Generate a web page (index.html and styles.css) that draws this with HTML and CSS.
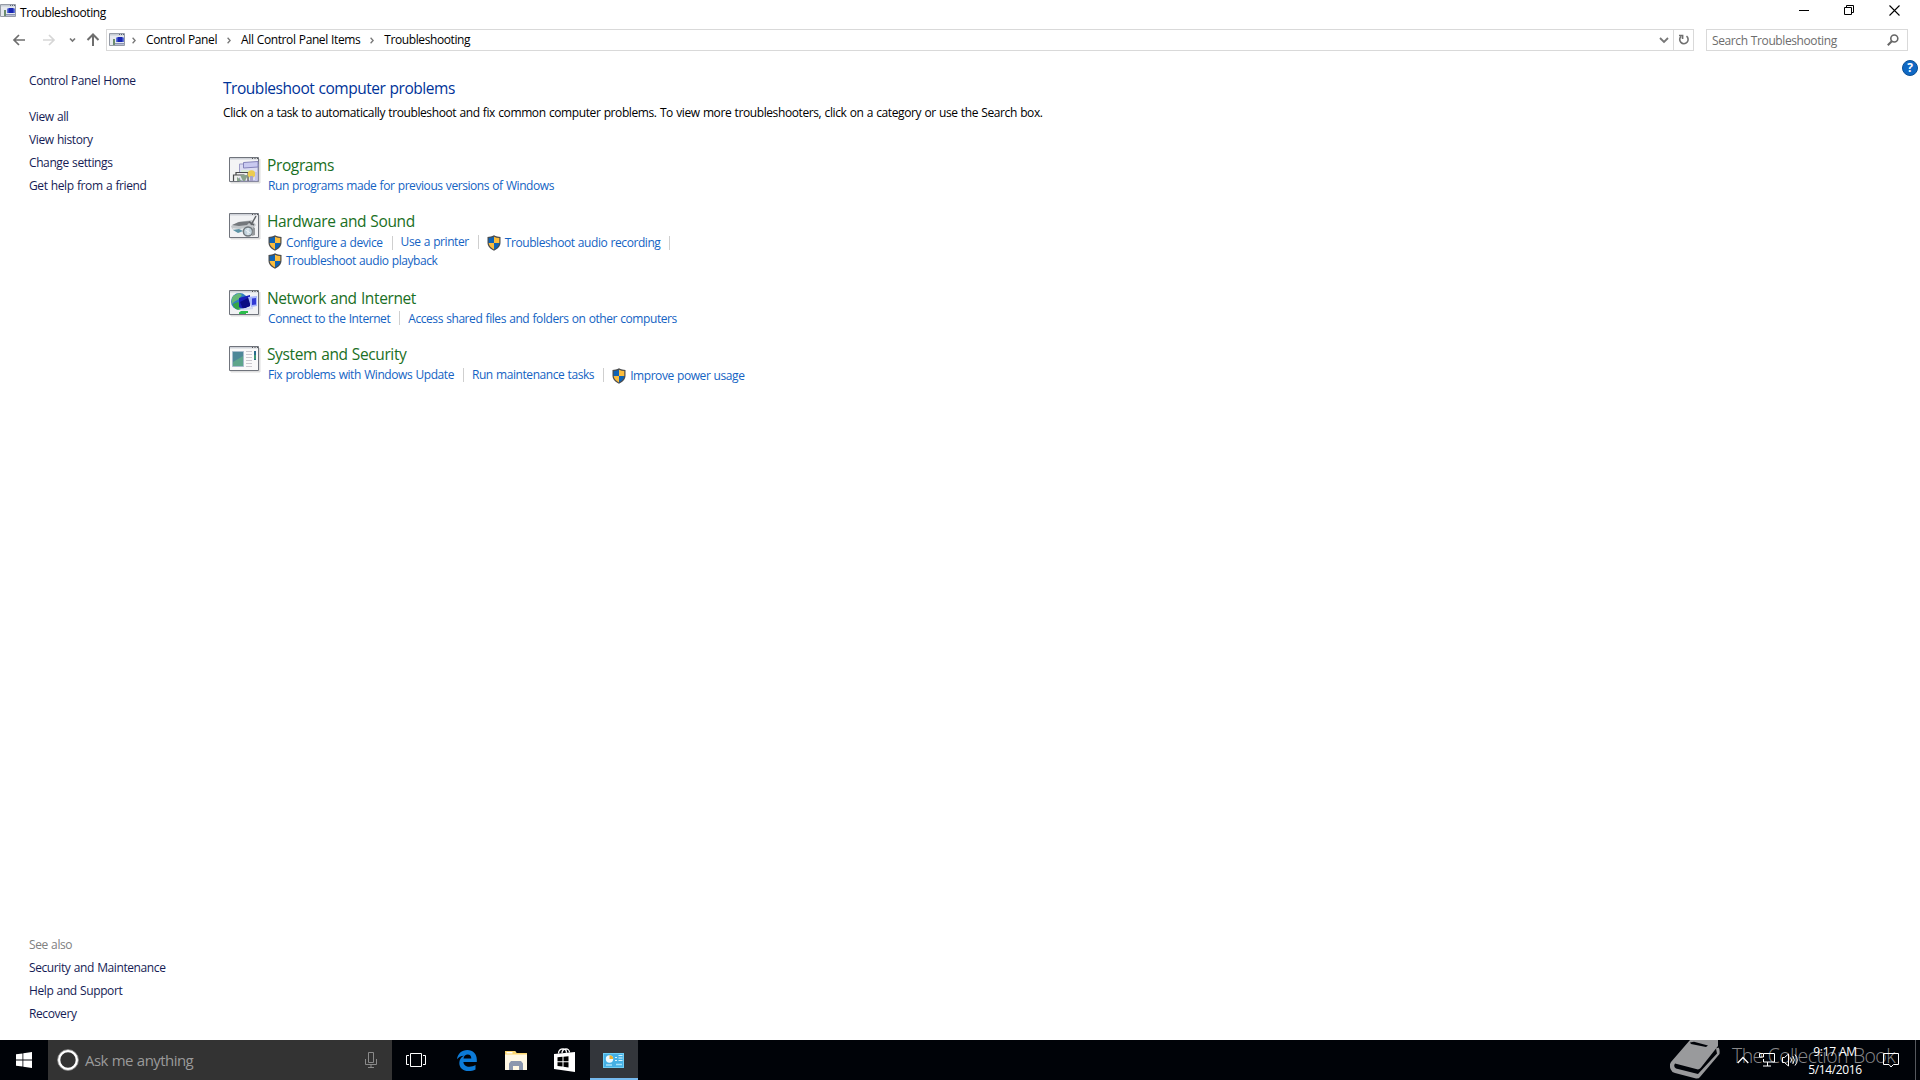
FILE: index.html
```html
<!DOCTYPE html>
<html lang="en">
<head>
    <meta charset="UTF-8">
    <title>Troubleshooting</title>
    <link rel="stylesheet" href="styles.css">
</head>
<body>
    <!-- shared icons -->
    <svg width="0" height="0" class="defs">
        <symbol id="shield" viewBox="0 0 14 16">
            <path d="M7 .3C5 1.6 2.6 2 .5 2v5.500c0 4 3 6.700 6.500 8.200 3.500-1.500 6.500-4.200 6.500-8.200V2C11.400 2 9 1.600 7 .3z" fill="#4b4c4e"/>
            <path d="M7 1.700C5.300 2.600 3.500 3 1.700 3.100V8H7z" fill="#0f63b5"/>
            <path d="M7 1.700c1.700.9 3.500 1.300 5.300 1.400V8H7z" fill="#fcbd3c"/>
            <path d="M1.700 8H7v6.400C4.200 13.100 1.900 11 1.700 8z" fill="#fcbd3c"/>
            <path d="M12.300 8H7v6.400c2.800-1.300 5.100-3.400 5.300-6.400z" fill="#0f63b5"/>
        </symbol>
        <symbol id="app" viewBox="0 0 16 13">
            <path d="M.5.5h15v12H.5z" fill="#e6e9ee" stroke="#959ba6"/>
            <path d="M1 1h14v1.500H1z" fill="#c6ccd4"/>
            <path d="M10 1h1v1h-1zM12 1h1v1h-1zM14 1h1v1h-1z" fill="#596373"/>
            <path d="M7 4.500h8V9H7z" fill="#5f74d8"/>
            <path d="M8.500 4h5v5h-5z" fill="#1a27b4"/>
            <path d="M4 6h2v6H4z" fill="#6b8c6e"/>
            <path d="M6 10h9v1.500H6z" fill="#8a92b4"/>
        </symbol>
    </svg>

    <div class="window">
        <div class="titlebar">
            <svg class="app-icon" width="16" height="13"><use href="#app"/></svg>
            <span class="title">Troubleshooting</span>
            <div class="controls">
                <svg width="10" height="11"><path d="M0 5.500h10" stroke="#000"/></svg>
                <svg width="10" height="11" fill="none" stroke="#000"><path d="M.5 2.500h7v7h-7zM2.500 2V.5h7v7H8"/></svg>
                <svg width="11" height="11"><path d="M.5.5l10 10M10.500.5l-10 10" stroke="#000" stroke-width="1.100"/></svg>
            </div>
        </div>

        <div class="navbar">
            <div class="nav-buttons">
                <svg width="106" height="22" fill="none" stroke-width="1.700">
                    <path d="M25 11H14M19 6l-5 5 5 5" stroke="#6e6e6e"/>
                    <path d="M43 11h11M49 6l5 5-5 5" stroke="#d6d6d6"/>
                    <path d="M70 9.500l2.500 2.500L75 9.500" stroke="#777"/>
                    <path d="M93 17V6M87.500 11L93 5.500l5.500 5.500" stroke="#6e6e6e" stroke-width="2"/>
                </svg>
            </div>
            <div class="address">
                <svg class="app-icon" width="16" height="13"><use href="#app"/></svg>
                <svg class="sep" width="4" height="7"><path d="M.6.8l2.500 2.700L.6 6.200" /></svg>
                <span class="crumb">Control Panel</span>
                <svg class="sep" width="4" height="7"><path d="M.6.8l2.500 2.700L.6 6.200" /></svg>
                <span class="crumb">All Control Panel Items</span>
                <svg class="sep" width="4" height="7"><path d="M.6.8l2.500 2.700L.6 6.200" /></svg>
                <span class="crumb">Troubleshooting</span>
                <svg class="drop" width="10" height="7" fill="none" stroke="#777" stroke-width="1.800"><path d="M1 1l4 4 4-4"/></svg>
                <div class="refresh">
                    <svg width="12" height="13" fill="none" stroke="#707070" stroke-width="1.600"><path d="M8.500 3.200A4.200 4.200 0 1 1 3.200 3.300"/><path d="M1 2.500h3.600V6" /></svg>
                </div>
            </div>
            <div class="search">
                <span>Search Troubleshooting</span>
                <svg width="12" height="12" fill="none" stroke="#666" stroke-width="1.600"><circle cx="7.300" cy="4.500" r="3.500"/><path d="M4.800 7.200L.8 11.200" stroke-width="2"/></svg>
            </div>
        </div>

        <div class="content">
            <div class="sidebar">
                <a class="home">Control Panel Home</a>
                <a>View all</a>
                <a>View history</a>
                <a>Change settings</a>
                <a>Get help from a friend</a>
                <div class="see-also">
                    <span>See also</span>
                    <a>Security and Maintenance</a>
                    <a>Help and Support</a>
                    <a>Recovery</a>
                </div>
            </div>

            <div class="main">
                <h1>Troubleshoot computer problems</h1>
                <p class="desc">Click on a task to automatically troubleshoot and fix common computer problems. To view more troubleshooters, click on a category or use the Search box.</p>

                <div class="category programs">
                    <svg class="cat-icon" width="32" height="27">
                        <path d="M1 25h30v1.500H2zM30 2h1.500v24H30z" fill="#dedede"/>
                        <path d="M.5.5h29v24H.5z" fill="#f4f4f5" stroke="#70747c"/>
                        <path d="M1 1h28v1.500H1z" fill="#cfd2d9"/><path d="M23 1.500h1M25.500 1.500h1M28 1.500h1" stroke="#555"/>
                        <path d="M10.500 7h18.500v17H10.500z" fill="#dcdcf2" stroke="#9d9cc6"/>
                        <path d="M14.500 5.500L29 4.500v5.500l-14.500 1z" fill="#c9c9f0" stroke="#8583ba"/>
                        <path d="M12 13h9v9h-9z" fill="#d8edd8"/>
                        <path d="M4.500 24v-6h11M7 18v-2.500h12V24" fill="#eee" stroke="#4a4a4c" stroke-width="1.200"/>
                        <circle cx="22.500" cy="17" r="3.800" fill="#eccb52"/>
                        <path d="M21 19h3v5h-3z" fill="#a9a4c9"/><path d="M26 15h2v9h-2z" fill="#c3c3ea"/>
                        <path d="M8 20l5 4H8zM11 18h8l-3 6h-2z" fill="#8aa38c"/>
                    </svg>
                    <div>
                        <h2>Programs</h2>
                        <div class="links"><a>Run programs made for previous versions of Windows</a></div>
                    </div>
                </div>

                <div class="category hardware">
                    <svg class="cat-icon" width="32" height="27">
                        <path d="M1 25h30v1.500H2zM30 2h1.500v24H30z" fill="#dedede"/>
                        <path d="M.5.5h29v24H.5z" fill="#f1f2f4" stroke="#70747c"/>
                        <path d="M1 1h28v1.500H1z" fill="#cfd2d9"/><path d="M23 1.500h1M25.500 1.500h1M28 1.500h1" stroke="#555"/>
                        <path d="M2 13l7-4 14-2 4 5-5 6-12 1-7-3z" fill="#c2c6c9"/>
                        <path d="M3 12l7-3 12-1-4 4-8 1z" fill="#74787c"/>
                        <path d="M3 15l8 1 7-2v4l-9 2z" fill="#e4e8ea"/>
                        <path d="M4 17l6-1 4 2-5 2z" fill="#5d94a6"/>
                        <path d="M22 12l5-9M20 9l5 3" stroke="#606367" stroke-width="1.500"/>
                        <circle cx="19" cy="18.500" r="4.600" fill="#c1d2dc" stroke="#6f767a" stroke-width="1.500"/>
                        <path d="M19 15v7M16.500 17l5 3" stroke="#eef4f7"/>
                        <path d="M24 14l2 1v7l-3 1z" fill="#95999c"/>
                    </svg>
                    <div>
                        <h2>Hardware and Sound</h2>
                        <div class="links">
                            <a class="admin"><svg width="14" height="16"><use href="#shield"/></svg><span>Configure a device</span></a>
                            <i></i>
                            <a class="up">Use a printer</a>
                            <i class="up"></i>
                            <a class="admin"><svg width="14" height="16"><use href="#shield"/></svg><span>Troubleshoot audio recording</span></a>
                            <i></i>
                        </div>
                        <div class="links second">
                            <a class="admin"><svg width="14" height="16"><use href="#shield"/></svg><span>Troubleshoot audio playback</span></a>
                        </div>
                    </div>
                </div>

                <div class="category network">
                    <svg class="cat-icon" width="32" height="27">
                        <path d="M1 25h30v1.500H2zM30 2h1.500v24H30z" fill="#dedede"/>
                        <path d="M.5.5h29v24H.5z" fill="#f1f2f4" stroke="#70747c"/>
                        <path d="M1 1h28v1.500H1z" fill="#cfd2d9"/><path d="M23 1.500h1M25.500 1.500h1M28 1.500h1" stroke="#555"/>
                        <circle cx="10.500" cy="11.500" r="8.500" fill="#2f7dc0"/>
                        <path d="M4 6l6-3 3 2-3 4-5 3-2 2c-1-3 0-6 1-8z" fill="#66b878"/>
                        <path d="M4 14l5-2 3 3-1 5c-4 0-7-3-7-6z" fill="#35a546"/>
                        <path d="M10 8l11-3v11l-7 3-4-2z" fill="#1a1fb8"/>
                        <path d="M11 12l10-5v9l-7 3z" fill="#0b0b83"/>
                        <path d="M19 7l9-1v10l-6 1z" fill="#a8b6fb"/>
                        <path d="M23 8.500l4-.5v6.500l-4 .5z" fill="#3139d5"/>
                        <path d="M9 19l15-2v2l-10 1.500z" fill="#d0d7ef"/>
                        <path d="M10 22.500l2-1.500h7v2h-2v1h-7z" fill="#2bbd4b"/>
                    </svg>
                    <div>
                        <h2>Network and Internet</h2>
                        <div class="links">
                            <a>Connect to the Internet</a>
                            <i class="up"></i>
                            <a>Access shared files and folders on other computers</a>
                        </div>
                    </div>
                </div>

                <div class="category system">
                    <svg class="cat-icon" width="32" height="27">
                        <path d="M1 25h30v1.500H2zM30 2h1.500v24H30z" fill="#dedede"/>
                        <path d="M.5.5h29v24H.5z" fill="#fafafa" stroke="#70747c"/>
                        <path d="M1 1h28v1.500H1z" fill="#cfd2d9"/><path d="M23 1.500h1M25.500 1.500h1M28 1.500h1" stroke="#555"/>
                        <path d="M3.500 5.500h11v15h-11z" fill="#4d8798" stroke="#a8bccd"/>
                        <path d="M4 16l10-6v10H4z" fill="#5da58b"/>
                        <path d="M17 5.500h6M17 8.500h6M17 11.500h6M17 14.500h6M17 17.500h6M17 20.500h6" stroke="#cbc8ce"/>
                        <path d="M25 5h2v9h-2z" fill="#286c8c"/><path d="M25 9h2v4h-2z" fill="#3e9775"/>
                    </svg>
                    <div>
                        <h2>System and Security</h2>
                        <div class="links">
                            <a class="up">Fix problems with Windows Update</a>
                            <i class="up"></i>
                            <a class="up">Run maintenance tasks</a>
                            <i class="up"></i>
                            <a class="admin"><svg width="14" height="16"><use href="#shield"/></svg><span>Improve power usage</span></a>
                        </div>
                    </div>
                </div>
            </div>

            <div class="help">?</div>
        </div>
    </div>

    <div class="taskbar">
        <div class="start">
            <svg width="16" height="16" fill="#fff"><path d="M0 2.300L6.500 1.400V7.600H0zM7.300 1.200L16 0v7.600H7.300zM0 8.400h6.500v6.200L0 13.700zM7.300 8.400H16V16l-8.700-1.200z"/></svg>
        </div>
        <div class="cortana">
            <svg width="22" height="22" fill="none"><circle cx="11" cy="11" r="9" stroke="#fff" stroke-width="2.600"/><circle cx="11" cy="11" r="10.400" stroke="#999" stroke-width=".8"/></svg>
            <span>Ask me anything</span>
            <svg class="mic" width="12" height="17" fill="none" stroke="#8a8a8a"><path d="M3.500.5h5v10h-5zM.5 7v5.500h11V7M6 12.500v3.500M3 15.500h6"/></svg>
        </div>
        <div class="task view">
            <svg width="20" height="14" fill="none" stroke="#fff"><path d="M4.500.5h11v13h-11zM3 2.500H.5v9H3M17 2.500h2.500v9H17"/></svg>
        </div>
        <div class="task edge">
            <svg width="20" height="21" viewBox="0 0 20 21"><path d="M0 9.300C.7 3.800 4.600 0 10.300 0 16 0 19.800 4 19.800 9.500V12H6.400c.2 3 2.600 4.800 6 4.800 2.200 0 4.300-.6 6.100-1.700v4.300c-2 1.100-4.400 1.600-7 1.600-5.600 0-9.200-3.300-9.200-8.100 0-3.200 1.700-5.700 4.600-7.200C3.800 5.900 1.500 7.200 0 9.300zM6.500 8.400h7.800c0-2.600-1.300-4-3.600-4-2.200 0-3.800 1.500-4.200 4z" fill="#0c7bd8"/></svg>
        </div>
        <div class="task folder">
            <svg width="22" height="19"><path d="M0 0h10l1.500 2H22v17H0z" fill="#fff8e4"/><path d="M0 0h10l1.500 2H22v1.500H0z" fill="#fbd56e"/><path d="M1.500 1h6v1.500h-6z" fill="#fff"/><path d="M4 19v-6.500L6 10h10l2 2.500V19h-4v-4H8v4z" fill="#8b97ae"/></svg>
        </div>
        <div class="task store">
            <svg width="21" height="24"><path d="M0 6l21-2v20L0 21z" fill="#fff"/><path d="M4.500 5.500C4.500 2.500 6.500.8 9 .8s3.500 1.500 3.500 4M8 5C8 2.500 10 .8 12 .8S15.500 2.500 15.500 4.500" fill="none" stroke="#fff" stroke-width="1.300"/><path d="M3.500 9.300l5-.5v4.400h-5zM9.500 8.700l5-.5v5h-5zM3.500 14.200h5v4.400l-5-.6zM9.500 14.200h5v5.200l-5-.7z" fill="#000"/></svg>
        </div>
        <div class="task active">
            <svg width="21" height="15"><path d="M0 0h21v15H0z" fill="#6fcdf3"/><path d="M1 1h19v13H1z" fill="#45b0e4"/><circle cx="6.500" cy="6" r="3.700" fill="#eef9ff"/><path d="M6.500 6V2.300A3.700 3.700 0 0 1 10.200 6z" fill="#efb22d"/><path d="M12 4.500h2M12 7.500h2M15.500 2.500h4M15.500 5h4M15.500 7.500h4" stroke="#d5f3ff" stroke-width="1.200"/><path d="M3 12h6M13 11.500h6" stroke="#a5e1fa" stroke-width="1.500"/></svg>
        </div>

        <div class="tray">
            <div class="watermark">
                <svg width="50" height="40"><path d="M20 0L1 22Q-1 25 .5 29Q1.500 32 5 33L26 38.500Q29 38.700 30 37L49.500 14Q50 9 48.500 7.500L46 8.500 47 13.500 28 34 6 28.500Q3 26.500 5 23.500L28 29.500Q30 29 31 27.500L48 6V0z" fill="#999a9c"/><path d="M20 2.500l4-.8 14 3.800-2 1.500-15-3z" fill="#000308"/></svg>
                <span>The Collection Book</span>
            </div>
            <svg class="chevron" width="12" height="8"><path d="M.7 7L6 1.500 11.300 7" fill="none" stroke="#fff" stroke-width="1.300"/></svg>
            <svg class="net" width="16" height="14" fill="none" stroke="#fff"><path d="M5 .5h10.500v8.500H4.500V6M8.500 9v4M4 13h8M.5.5h4v3.500h-4z"/></svg>
            <svg class="vol" width="17" height="14" fill="none" stroke="#fff"><path d="M.5 4.500h2l4-3.500v12l-4-3.500h-2zM8.500 4.500q2 2.500 0 5M10.800 3q3 4 0 8M13 1.500q4.500 5.500 0 11"/></svg>
            <div class="clock"><span>9:17 AM</span><span>5/14/2016</span></div>
            <svg class="notify" width="16" height="15" fill="none" stroke="#fff"><path d="M.5.5h15v11h-5L8 14l-2-2.500H.5z"/></svg>
            <div class="show-desktop"></div>
        </div>
    </div>
</body>
</html>
```
FILE: styles.css
```css
* {
    box-sizing: border-box;
}

body {
    margin: 0;
    width: 1920px;
    height: 1080px;
    overflow: hidden;
    display: flex;
    flex-direction: column;
    background: #fff;
    color: #000;
    font-family: "Open Sans", "Noto Sans", sans-serif;
    font-size: 12px;
    letter-spacing: -0.4px;
    word-spacing: 0.55px;
    line-height: 17px;
    white-space: nowrap;
}

svg {
    display: block;
    flex: none;
}

.defs {
    position: absolute;
}

.window {
    flex: 1;
    display: flex;
    flex-direction: column;
}

/* title bar */
.titlebar {
    height: 24px;
    display: flex;
    align-items: flex-start;
    padding-top: 4px;
}

.title {
    margin-left: 4px;
}

.controls {
    margin-left: auto;
    display: flex;
    gap: 35px;
    padding: 1px 20px 0 0;
}

/* navigation */
.navbar {
    height: 34px;
    display: flex;
    padding: 5px 12px 7px 0;
}

.nav-buttons {
    width: 106px;
}

.address {
    width: 1588px;
    display: flex;
    align-items: center;
    border: 1px solid #d9d9d9;
    padding-left: 2px;
}

.address .app-icon,
.crumb {
    margin-bottom: 1px;
}

.sep {
    fill: none;
    stroke: #777;
    stroke-width: 1.3;
    margin-right: 10px;
    margin-left: 10px;
}

.address .app-icon + .sep {
    margin-left: 7px;
}

.drop {
    margin-left: auto;
    margin-right: 4px;
}

.refresh {
    width: 20px;
    height: 20px;
    border-left: 1px solid #d9d9d9;
    padding: 3px 0 0 4px;
}

.search {
    margin-left: 12px;
    flex: 1;
    display: flex;
    align-items: center;
    justify-content: space-between;
    border: 1px solid #d9d9d9;
    padding: 0 8px 0 5px;
    color: #6d6d6d;
}

/* body of the window */
.content {
    flex: 1;
    display: flex;
}

.sidebar {
    width: 223px;
    padding: 14px 0 19px 29px;
    display: flex;
    flex-direction: column;
    color: #151c55;
}

.sidebar a,
.sidebar span {
    height: 16px;
    margin-bottom: 7px;
}

.sidebar .home {
    margin-bottom: 20px;
}

.see-also {
    margin-top: auto;
    display: flex;
    flex-direction: column;
}

.see-also a:last-child {
    margin-bottom: 0;
}

.sidebar span {
    color: #808080;
}

.main {
    flex: 1;
    padding-top: 19px;
}

h1, h2, p {
    margin: 0;
    font-weight: normal;
}

h1 {
    font-size: 15.5px;
    line-height: 22px;
    letter-spacing: -0.46px;
    color: #003399;
}

.desc {
    margin-top: 5px;
}

.category {
    display: flex;
    padding-left: 6px;
}

.cat-icon {
    margin-right: 7px;
}

.programs { margin-top: 36px; height: 56px; }
.hardware { height: 77px; }
.network { height: 56px; }

h2 {
    font-size: 15.5px;
    line-height: 20px;
    letter-spacing: -0.38px;
    color: #1a6f24;
    margin: -2px 0 1px -1px;
}

.links {
    display: flex;
    align-items: center;
    height: 19px;
    letter-spacing: -0.43px;
    color: #1463c3;
}

.hardware .links {
    margin-top: 2px;
}

.hardware .second {
    margin-top: -1px;
}

.system .links {
    margin-top: 2px;
}

.links i {
    width: 1px;
    height: 14px;
    margin: 0 8px 0 9px;
    background: #cfcfcf;
}

.links .up {
    transform: translateY(-1px);
}

.admin {
    display: flex;
    align-items: center;
    gap: 4px;
}

.help {
    width: 16px;
    height: 16px;
    margin: 2px 2px 0 0;
    border: 1px solid #0b4f94;
    border-radius: 50%;
    background: #0f68c4;
    color: #fff;
    font-weight: bold;
    font-size: 12px;
    line-height: 14px;
    text-align: center;
}

/* taskbar */
.taskbar {
    height: 40px;
    display: flex;
    background: #000308;
    color: #fff;
}

.start {
    width: 48px;
    padding: 12px 16px;
}

.cortana {
    width: 344px;
    display: flex;
    align-items: center;
    background: #333;
    padding: 0 15px 0 9px;
    color: #9a9a9a;
    font-size: 15px;
    letter-spacing: -0.55px;
}

.cortana span {
    margin-left: 6px;
}

.mic {
    margin-left: auto;
}

.task {
    width: 49px;
    display: flex;
    align-items: center;
    justify-content: center;
}

.task.view { width: 48px; }
.task.edge { width: 54px; }
.task.folder { width: 44px; }
.task.store { width: 52px; }

.task.active {
    width: 48px;
    background: #33363b;
    border-bottom: 2px solid #76b9ed;
    padding-top: 2px;
}

.task.active svg {
    margin-right: 1px;
}

.tray {
    margin-left: auto;
    display: flex;
    align-items: center;
    position: relative;
}

.watermark {
    position: absolute;
    left: -68px;
    top: 0;
    display: flex;
    color: #88898b;
    font-size: 19.5px;
    font-weight: 300;
    letter-spacing: -0.6px;
}

.watermark span {
    margin: 7px 0 0 12px;
}

.tray > svg,
.clock {
    position: relative;
}

.chevron { margin-left: -1px; }
.net { margin-left: 10px; }
.vol { margin-left: 7px; }

.clock {
    width: 62px;
    margin-left: 5px;
    padding-top: 1px;
    display: flex;
    flex-direction: column;
    align-items: center;
    line-height: 18px;
    letter-spacing: -0.35px;
}

.notify { margin-left: 17px; }

.show-desktop {
    width: 5px;
    height: 40px;
    margin-left: 16px;
    border-left: 1px solid #55585d;
}
```
